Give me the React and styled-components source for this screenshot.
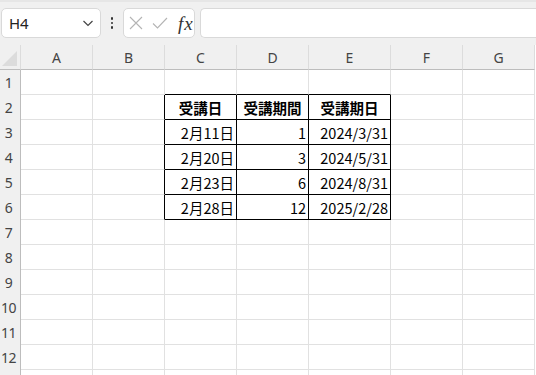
import React from "react";
import styled, { createGlobalStyle } from "styled-components";

const GlobalStyle = createGlobalStyle`
  html, body {
    margin: 0;
    padding: 0;
    background: #ffffff;
    overflow: hidden;
  }
  body {
    font-family: "Noto Sans", "Noto Sans CJK JP", sans-serif;
  }
`;

const COLS = [
  { key: "A", width: 72 },
  { key: "B", width: 72 },
  { key: "C", width: 72 },
  { key: "D", width: 72 },
  { key: "E", width: 82 },
  { key: "F", width: 72 },
  { key: "G", width: 72 },
];
const ROW_COUNT = 13;

// table C2:E6
const TABLE = {
  2: ["受講日", "受講期間", "受講期日"],
  3: ["2月11日", "1", "2024/3/31"],
  4: ["2月20日", "3", "2024/5/31"],
  5: ["2月23日", "6", "2024/8/31"],
  6: ["2月28日", "12", "2025/2/28"],
};

const inTable = (r, c) => r >= 2 && r <= 6 && c >= 2 && c <= 4;

export default function App() {
  return (
    <>
      <GlobalStyle />
      <Styled.Page>
        <Styled.Toolbar>
          <Styled.NameBox>
            <Styled.NameText>H4</Styled.NameText>
            <svg width="14" height="14" viewBox="0 0 14 14">
              <path d="M2.5 5 L7 9.5 L11.5 5" fill="none" stroke="#444" strokeWidth="1.2" />
            </svg>
          </Styled.NameBox>
          <Styled.Dots>
            <span />
            <span />
            <span />
          </Styled.Dots>
          <Styled.FormulaButtons>
            <svg width="14" height="14" viewBox="0 0 14 14">
              <path d="M1 1 L13 13 M13 1 L1 13" stroke="#b4b4b4" strokeWidth="1.1" />
            </svg>
            <svg width="16" height="14" viewBox="0 0 16 14">
              <path d="M1 7.5 L5.5 12 L15 2" fill="none" stroke="#b4b4b4" strokeWidth="1.1" />
            </svg>
            <Styled.Fx>fx</Styled.Fx>
          </Styled.FormulaButtons>
          <Styled.FormulaInput />
        </Styled.Toolbar>

        <Styled.Sheet>
          <Styled.Corner>
            <Styled.CornerTriangle />
          </Styled.Corner>
          {COLS.map((col) => (
            <Styled.ColHeader key={col.key}>{col.key}</Styled.ColHeader>
          ))}

          {Array.from({ length: ROW_COUNT }, (_, i) => {
            const r = i + 1;
            return (
              <React.Fragment key={r}>
                <Styled.RowHeader>{r}</Styled.RowHeader>
                {COLS.map((col, c) => {
                  const value = TABLE[r] && c >= 2 && c <= 4 ? TABLE[r][c - 2] : "";
                  return (
                    <Styled.Cell
                      key={col.key}
                      $right={inTable(r, c) || inTable(r, c + 1)}
                      $bottom={inTable(r, c) || inTable(r + 1, c)}
                      $head={r === 2 && inTable(r, c)}
                    >
                      {value}
                    </Styled.Cell>
                  );
                })}
              </React.Fragment>
            );
          })}
        </Styled.Sheet>
      </Styled.Page>
    </>
  );
}

const Styled = {
  Page: styled.div`
    width: 536px;
    height: 375px;
    overflow: hidden;
    background: #ffffff;
  `,
  Toolbar: styled.div`
    height: 45px;
    box-sizing: border-box;
    background: #f0f0f0;
    border-top: 2px solid #e6e6e6;
    display: flex;
    align-items: center;
    padding: 5px 0 6px 1px;
  `,
  NameBox: styled.div`
    width: 100px;
    height: 30px;
    box-sizing: border-box;
    background: #ffffff;
    border: 1px solid #d9d9d9;
    border-radius: 5px;
    display: flex;
    align-items: center;
    justify-content: space-between;
    padding: 0 5px 0 7px;
  `,
  NameText: styled.span`
    font-family: "Noto Sans", sans-serif;
    font-size: 15px;
    color: #222;
  `,
  Dots: styled.div`
    width: 22px;
    display: flex;
    flex-direction: column;
    align-items: center;
    gap: 2px;
    span {
      width: 2.5px;
      height: 2.5px;
      border-radius: 50%;
      background: #333;
    }
  `,
  FormulaButtons: styled.div`
    width: 72px;
    height: 30px;
    box-sizing: border-box;
    background: #ffffff;
    border: 1px solid #d9d9d9;
    border-radius: 5px;
    display: flex;
    align-items: center;
    gap: 9px;
    padding: 0 0 0 5px;
  `,
  Fx: styled.span`
    font-family: "Liberation Serif", serif;
    font-style: italic;
    font-size: 19px;
    line-height: 1;
    color: #333;
    margin-left: 1px;
    letter-spacing: 1px;
  `,
  FormulaInput: styled.div`
    flex: 1;
    height: 30px;
    box-sizing: border-box;
    margin-left: 5px;
    background: #ffffff;
    border: 1px solid #d9d9d9;
    border-right: none;
    border-radius: 5px 0 0 5px;
  `,
  Sheet: styled.div`
    display: grid;
    grid-template-columns: 21px ${COLS.map((c) => `${c.width}px`).join(" ")};
    grid-template-rows: 25px;
    grid-auto-rows: 25px;
  `,
  Corner: styled.div`
    position: relative;
    background: #f0f0f0;
    border-bottom: 1px solid #bdbdbd;
    border-right: 1px solid #dcdcdc;
  `,
  CornerTriangle: styled.div`
    position: absolute;
    right: 3px;
    bottom: 3px;
    width: 0;
    height: 0;
    border-left: 15px solid transparent;
    border-bottom: 15px solid #dcdcdc;
  `,
  ColHeader: styled.div`
    background: #f0f0f0;
    box-sizing: border-box;
    border-bottom: 1px solid #bdbdbd;
    border-right: 1px solid #dcdcdc;
    display: flex;
    align-items: center;
    justify-content: center;
    font-family: "Noto Sans", sans-serif;
    font-size: 14px;
    color: #444;
    padding-top: 1px;
  `,
  RowHeader: styled.div`
    background: #f0f0f0;
    box-sizing: border-box;
    border-right: 1px solid #bdbdbd;
    display: flex;
    align-items: center;
    justify-content: center;
    padding-right: 3px;
    font-family: "Noto Sans", sans-serif;
    font-size: 14px;
    letter-spacing: -0.5px;
    color: #444;
    white-space: nowrap;
  `,
  Cell: styled.div`
    box-sizing: border-box;
    border-right: 1px solid ${(p) => (p.$right ? "#000" : "#e1e1e1")};
    border-bottom: 1px solid ${(p) => (p.$bottom ? "#000" : "#e1e1e1")};
    display: flex;
    align-items: center;
    justify-content: ${(p) => (p.$head ? "center" : "flex-end")};
    padding: 1px 2px 0 2px;
    font-family: "Noto Sans CJK JP", sans-serif;
    font-size: 14.5px;
    font-weight: ${(p) => (p.$head ? 700 : 400)};
    color: #000;
    white-space: nowrap;
  `,
};
